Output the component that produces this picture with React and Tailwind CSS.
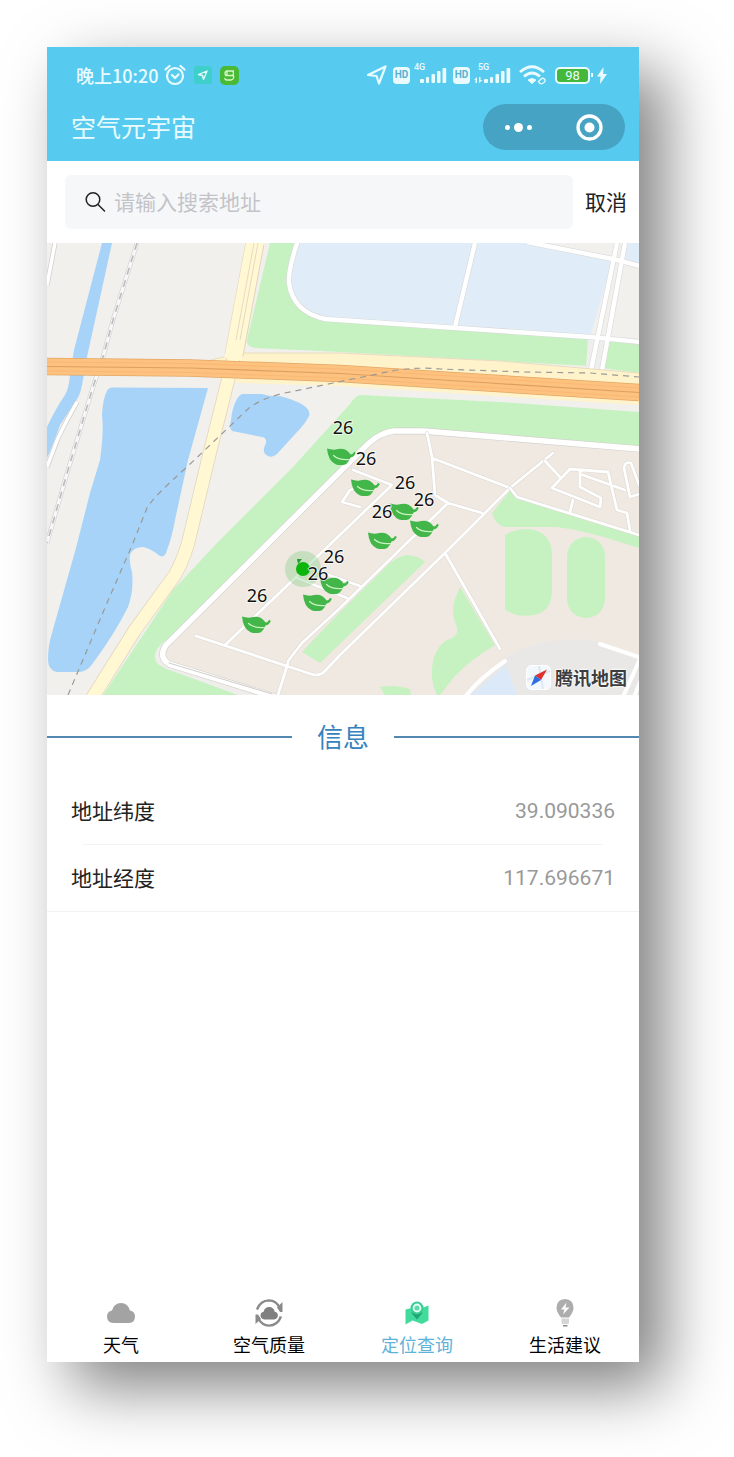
import React from "react";

const cjk = "font-['Noto_Sans_CJK_SC',sans-serif]";

const markers = [
  [341, 456, 343],
  [365, 487, 366],
  [404, 511, 405],
  [424, 528, 424],
  [382, 540, 382],
  [334, 585, 334],
  [317, 602, 318],
  [256, 624, 257],
];

function Signal() {
  return (
    <svg className="h-4 w-[27px]" viewBox="0 0 27 16" fill="currentColor" aria-hidden="true">
      <rect x="0" y="12" width="4" height="4" rx="1" />
      <rect x="6" y="10" width="3" height="6" rx="1" />
      <rect x="11.500" y="7" width="3.500" height="9" rx="1" />
      <rect x="17" y="4" width="3.500" height="12" rx="1" />
      <rect x="22.500" y="1" width="3.700" height="15" rx="1" />
    </svg>
  );
}

function Hd() {
  return (
    <span className="flex h-[17px] w-[17px] items-center justify-center rounded bg-[#e9fbff] font-['Roboto',sans-serif] text-[10px] leading-none font-bold text-[#55b2d2]">
      HD
    </span>
  );
}

function StatusBar() {
  return (
    <div className="flex h-8 items-center justify-between pr-8 pb-[2px] pl-[29px] text-[#e9fbff]">
      <div className="flex items-center">
        <span className="text-lg leading-6 font-medium">晚上10:20</span>
        <svg className="ml-[6px] h-[22px] w-[22px]" viewBox="0 0 22 22" fill="none" stroke="currentColor" strokeWidth="2.200" strokeLinecap="round" aria-label="闹钟">
          <circle cx="11" cy="12" r="8" />
          <path d="M1.500 5.500 5.500 2M20.500 5.500 16.500 2M8 11l3 3 3.500-3.500" />
        </svg>
        <svg className="ml-2 h-[18px] w-[18px]" viewBox="0 0 18 18" aria-hidden="true">
          <rect width="18" height="18" rx="3" fill="#3fcfcb" />
          <path d="M4.500 8.500 13 5l-3.500 8.500L8.500 9.500z" fill="none" stroke="#e9fbff" strokeWidth="1.300" strokeLinejoin="round" />
        </svg>
        <svg className="ml-2 h-[19px] w-[19px]" viewBox="0 0 19 19" aria-hidden="true">
          <rect width="19" height="19" rx="5" fill="#4ab935" />
          <path d="M13.500 5H7.500Q5 5 5 7.300T7.500 9.500H12.500M5.500 9.500H12Q14 9.500 13.700 11.500T11 14H7Q5 14 4.800 12.300M7 5v4M13.300 5v4" fill="none" stroke="#d9f9c8" strokeWidth="1.300" strokeLinecap="round" />
        </svg>
      </div>
      <div className="flex items-center">
        <svg className="h-5 w-5" viewBox="0 0 20 20" fill="none" stroke="currentColor" strokeWidth="2.200" strokeLinejoin="round" aria-hidden="true">
          <path d="M1 10 18.500 1.500 12 18.500 9.500 11z" />
        </svg>
        <span className="ml-[6px]"><Hd /></span>
        <span className="relative ml-[10px]">
          <span className="absolute -top-1 -left-[6px] font-['Roboto',sans-serif] text-[9px] leading-none font-medium">4G</span>
          <Signal />
        </span>
        <span className="ml-[6px]"><Hd /></span>
        <span className="relative ml-[14px]">
          <span className="absolute -top-1 -left-[6px] font-['Roboto',sans-serif] text-[9px] leading-none font-medium">5G</span>
          <svg className="absolute bottom-0 -left-[10px] h-[6px] w-[9px]" viewBox="0 0 9 6" fill="currentColor" aria-hidden="true">
            <path d="M0 3 3 0v6H1.500V3zM8.500 3 5 6V0h1.500v3z" />
          </svg>
          <Signal />
        </span>
        <svg className="ml-2 h-[20px] w-[28px]" viewBox="0 0 28 20" fill="none" stroke="currentColor" strokeWidth="2.800" aria-label="Wi-Fi">
          <path d="M1 7Q13 -3.500 25 7M5 11.500Q13 4.500 21 11.500" />
          <path d="M9 15Q13 12 17 15L13 18.500z" fill="currentColor" strokeWidth="1" />
          <path d="M19.500 16.500 22 14q2-1.500 3.500 0t-.5 3.500q-2.500 2-4 1z" strokeWidth="1.300" />
        </svg>
        <span className="ml-2 flex h-[17px] w-[35px] items-center justify-center rounded-[5px] border-2 border-[#e9fbff] bg-[#43b83a] font-['Roboto',sans-serif] text-[13px] leading-none">
          98
        </span>
        <span className="ml-[1px] h-1 w-[2px] bg-[#e9fbff]" />
        <svg className="ml-1 h-[17px] w-[10px]" viewBox="0 0 10 17" fill="currentColor" aria-hidden="true">
          <path d="M6.500 0 0 9.500h3.500L3 17l7-10H6.200z" />
        </svg>
      </div>
    </div>
  );
}

function Header() {
  return (
    <header className="bg-[#57cbef] pt-[13px] pb-[11px]">
      <StatusBar />
      <div className="mt-3 flex h-[46px] items-center justify-between pr-[14px] pl-6">
        <h1 className="pb-[2px] text-[25px] leading-9 text-[#e9fbff]">空气元宇宙</h1>
        <div className="flex h-[46px] w-[142px] items-center rounded-full bg-[#47a3c3]">
          <button type="button" aria-label="更多" className="flex flex-1 items-center justify-center gap-1">
            <span className="h-[5px] w-[5px] rounded-full bg-white" />
            <span className="h-[9px] w-[9px] rounded-full bg-white" />
            <span className="h-[5px] w-[5px] rounded-full bg-white" />
          </button>
          <button type="button" aria-label="关闭" className="flex flex-1 items-center justify-center">
            <svg className="h-[27px] w-[27px]" viewBox="0 0 27 27">
              <circle cx="13.500" cy="13.500" r="11.500" fill="none" stroke="white" strokeWidth="3.300" />
              <circle cx="13.500" cy="13.500" r="5" fill="white" />
            </svg>
          </button>
        </div>
      </div>
    </header>
  );
}

function SearchBar() {
  return (
    <form className="flex items-center gap-3 py-[14px] pr-3 pl-[18px]" onSubmit={(e) => e.preventDefault()}>
      <label className="flex h-[54px] min-w-0 flex-1 items-center gap-2 rounded-md bg-[#f6f7f9] px-5 pb-[2px]">
        <svg className="h-[21px] w-[21px] shrink-0" viewBox="0 0 21 21" fill="none" stroke="#222" strokeWidth="1.500" strokeLinecap="round" aria-hidden="true">
          <circle cx="8" cy="8.500" r="6.800" />
          <path d="m13 13.500 6.500 6.500" />
        </svg>
        <input
          type="text"
          aria-label="搜索地址"
          placeholder="请输入搜索地址"
          className="min-w-0 flex-1 bg-transparent text-[21px] leading-8 text-[#222] outline-none placeholder:text-[#c3c4c8]"
        />
      </label>
      <button type="button" className="pb-[2px] text-[21px] leading-8 text-[#222]">取消</button>
    </form>
  );
}

function Leaf({ x, y }) {
  return (
    <g transform={`translate(${x} ${y})`}>
      <path d="M-14-7.500Q-8-5.500-3-7 4-8.500 8-3.500L9.500-1.500Q12-1.500 13.200-4.200L14.800-3Q13 1 9.500 1.500 8 6 5 8.200 0 9.800-5 8.500-13 5-14-7.500Z" fill="#43b649" />
      <path d="M-7.500-.5Q-2 4.500 8.500 3.500" fill="none" stroke="#c9f2c0" strokeWidth="1.200" strokeLinecap="round" />
    </g>
  );
}

function MapView() {
  return (
    <section aria-label="地图" className="relative overflow-hidden">
      <svg className="block h-auto w-full" viewBox="47 243 592 452" fill="none">
        <rect x="47" y="243" width="592" height="452" fill="#f1f0ed" />

        {/* water */}
        <g fill="#a6d3f7">
          <path d="M102 243H112L87 357 82 385Q80 397 73 405L60 425Q55 440 47 458V427Q56 408 65 395 69 388 70 375L74 350Z" />
          <path d="M112 387.500 208 388 188 460 175 520Q172 537 167 550 165 558 160 556 150 548 143 547 133 547 130 555 129 562 132 572 134 590 128 607 114 635 93 663 88 671 80 672H57Q48 670 48 660 48 645 52 633L76 548 90 493 100 460Q104 432 102 415 103 398 107 391 108 388 112 387.500Z" />
          <path d="M243 394H262Q272 397 280 396 295 400 303 405 311 410 309 416 305 424 297 432L277 454Q272 458 268 456 263 454 264 448L266 443Q267 438 262 437L232 431Q229 429 231 420 232 408 237 399 240 394 243 394Z" />
        </g>

        {/* local paths on the west side */}
        <path d="M55 243 47 285M77 402 66 422 58 438 47 467" stroke="#cfcfcf" strokeWidth="5" />
        <path d="M55 243 47 285M77 402 66 422 58 438 47 467" stroke="#fff" strokeWidth="3.500" />
        <path d="M137 243 113 320 103 357 93 387 68 470 47 543" stroke="#d3d2d2" strokeWidth="4.500" />
        <path d="M137 243 113 320 103 357 93 387 68 470 47 543" stroke="#f8f8f8" strokeWidth="3.200" />
        <path d="M137 243 113 320 103 357 93 387 68 470 47 543" stroke="#bdbbbb" strokeWidth="1.600" strokeDasharray="7 6" />

        {/* blocks north of the highway */}
        <path d="M270 243H297Q287 278 288 283 292 310 322 318L457 328 590 337 639 342V373L588 366 340 352 255 348Q246 346 247 340Z" fill="#c6f2c1" />
        <path d="M297 243H530L613 259 590 337 457 328 322 318Q292 310 289 283 290 268 297 243Z" fill="#e0edf9" />
        <path d="M625 243H639V265L622 259Z" fill="#e0edf9" />
        <path d="M588 337H605L600 368H586Z" fill="#eeeeec" />
        <g strokeLinejoin="round">
          <path d="M298 240Q288 270 289 283 293 312 325 319L457 328 590 337 640 342M475 243 455 327M527 242 613 259 640 266M617 243 591 370M625 243 602 370" stroke="#d9d9d9" strokeWidth="5.600" />
          <path d="M298 240Q288 270 289 283 293 312 325 319L457 328 590 337 640 342M475 243 455 327M527 242 613 259 640 266M617 243 591 370M625 243 602 370" stroke="#fff" strokeWidth="4.400" />
        </g>

        {/* campus */}
        <path d="M360 395 500 402 639 412V695H103L173 590 217 543 293 467 350 404Q355 396 360 395Z" fill="#c6f2c1" />
        <path d="M166 640Q150 652 157 663 162 668 175 672L238 695H290L300 600Z" fill="#efeeeb" />
        <path d="M639 448 423 431H392Q378 434 368 444L166 645Q159 658 171 664L273 695H639Z" fill="#efe9e1" />
        <g fill="#c6f2c1">
          <path d="M492 513 510 491 517 498 570 513 639 537V548L607 538Q580 530 557 527H505Q496 526 492 513Z" />
          <path d="M505 535Q515 529 528 529 552 531 552 556V592Q551 612 534 615 515 618 505 609Z" />
          <rect x="567" y="537" width="38" height="81" rx="19" />
          <path d="M425 562Q418 555 406 555 398 557 390 563L340 612 302 652 320 663Z" />
          <path d="M460 587 495 645Q470 660 454 677L440 695H437Q431 684 432 668 434 648 447 640 459 637 457 627 451 615 454 602Z" />
          <path d="M380 687Q395 684 410 689L411 695H385Z" />
        </g>
        <path d="M465 695 500 662Q520 645 557 640 610 635 639 663V695Z" fill="#e9e8e7" />
        <path d="M471 695 506 665 517 695Z" fill="#dce9f8" />

        <g strokeLinejoin="round" strokeLinecap="round">
          <path d="M641 449 423 431H394Q380 433 369 443L166 645Q158 657 169 664L275 697" stroke="#d3d0cd" strokeWidth="6.800" />
          <path d="M641 449 423 431H394Q380 433 369 443L166 645Q158 657 169 664L275 697" stroke="#fff" strokeWidth="5.600" />
          <path d="M169 663 272 694" stroke="#cfccc9" strokeWidth="1" />
          <path
            d="M427 433 432 457 435 495 448 503 482 513M432 458 510 488M553 453 510 488 445 553 340 655 325 671Q319 677 311 674L196 636M288 663 278 695M288 661 302 643 340 608 448 503M225 645 295 578 392 485 353 470M297 578 347 598M315 570 360 586M360 507 342 502 350 490 363 486M445 553 500 649"
            stroke="#dbd7d2" strokeWidth="3.800"
          />
          <path
            d="M427 433 432 457 435 495 448 503 482 513M432 458 510 488M553 453 510 488 445 553 340 655 325 671Q319 677 311 674L196 636M288 663 278 695M288 661 302 643 340 608 448 503M225 645 295 578 392 485 353 470M297 578 347 598M315 570 360 586M360 507 342 502 350 490 363 486M445 553 500 649"
            stroke="#fff" strokeWidth="2.800"
          />
          <path
            d="M510 488 517 497 639 535M545 461 560 477M552 488 600 507 601 498 580 487 580 472M552 488 570 469 608 472 617 510 627 513 630 531M580 474 625 490M573 500 570 512M639 494 630 497 624 468Q625 461 631 463L639 485"
            stroke="#dbd7d2" strokeWidth="3.800"
          />
          <path
            d="M510 488 517 497 639 535M545 461 560 477M552 488 600 507 601 498 580 487 580 472M552 488 570 469 608 472 617 510 627 513 630 531M580 474 625 490M573 500 570 512M639 494 630 497 624 468Q625 461 631 463L639 485"
            stroke="#fff" strokeWidth="2.800"
          />
          <path d="M465 697Q480 678 505 661M600 644 639 657M639 661 623 697M643 675 634 697" stroke="#fff" strokeWidth="4" />
        </g>

        {/* arterial roads */}
        <path d="M207 361 240 353 340 353 500 361 639 373V405L340 386 240 383 207 376Z" fill="#fff3cb" />
        <path d="M207 361 240 353 340 353 500 361 639 373" stroke="#e9dcc0" strokeWidth="1" />
        <path d="M255 240 233 360 208 460 190 535Q186 555 175 575L135 630 91 700" stroke="#e2d4bd" strokeWidth="14" />
        <path d="M255 240 233 360 208 460 190 535Q186 555 175 575L135 630 91 700" stroke="#fff8d2" strokeWidth="12.500" />
        <path d="M255 243 234 355" stroke="#e2d4bd" strokeWidth="19" />
        <path d="M255 242 233 359" stroke="#fff8d2" strokeWidth="17.500" />
        <path d="M254 243 236 340M258 243 240 340" stroke="#e6d9c2" strokeWidth="1" />
        <path d="M47 366.500 190 368 340 373.500 490 383 639 392.500" stroke="#e2a765" strokeWidth="17.500" />
        <path d="M47 366.500 190 368 340 373.500 490 383 639 392.500" stroke="#fdc27f" strokeWidth="16" />
        <path d="M47 366.500 190 368 340 373.500 490 383 639 392.500" stroke="#dfa05e" strokeWidth="1.200" />
        <path d="M47 362 190 363.500 340 369 490 378.500 639 388M47 371 190 372.500 340 378 490 387.500 639 397" stroke="#fab873" strokeWidth="1" />

        {/* metro line */}
        <path
          d="M68 695 107 603 133 543 147 508Q152 498 187 467L250 407Q262 399 280 394L333 383 397 370Q420 367 440 369L523 372 590 373 639 377"
          stroke="#9a9a98" strokeWidth="1.200" strokeDasharray="6 5"
        />

        {/* current position */}
        <circle cx="303" cy="569" r="18" fill="#7fcf7f" fillOpacity="0.350" />
        <path d="M297 559l5 0-4 5z" fill="#2a9a35" />
        <circle cx="303" cy="569" r="7" fill="#0db50d" />

        {markers.map(([x, y]) => (
          <Leaf key={`leaf-${x}`} x={x} y={y} />
        ))}
        <g className="font-['Noto_Sans',sans-serif] text-lg" fill="#111" stroke="#fff" strokeWidth="2" strokeOpacity="0.700" paintOrder="stroke" textAnchor="middle">
          {markers.map(([x, y, tx]) => (
            <text key={`aqi-${x}`} x={tx} y={y - 22}>26</text>
          ))}
        </g>
      </svg>
      <a href="#map" className="absolute right-3 bottom-1 flex items-center gap-1 text-lg leading-7 font-bold text-[#3d3d3f] [text-shadow:0_0_2px_#fff,0_0_2px_#fff,0_0_3px_#fff]">
        <svg className="h-[25px] w-[25px]" viewBox="0 0 25 25" aria-hidden="true">
          <rect x="0.500" y="0.500" width="24" height="24" rx="5" fill="#f3f8fd" stroke="#fff" />
          <path d="M1 15 24 6M13 1l4 23" stroke="#dce8f4" strokeWidth="2" />
          <path d="M21 4.500 9 10.500 15 15z" fill="#e0322c" />
          <path d="M5 21 9 10.500 15 15z" fill="#2c6fe0" />
        </svg>
        腾讯地图
      </a>
    </section>
  );
}

function Info() {
  return (
    <section>
      <div className="flex h-[83px] items-center gap-[25px]">
        <span className="h-[2px] flex-1 bg-[#5088b0]" />
        <h2 className="pb-[2px] text-[26px] leading-9 text-[#3583be]">信息</h2>
        <span className="h-[2px] flex-1 bg-[#5088b0]" />
      </div>
      <dl className="text-[21px] leading-8">
        <div className="flex h-[66px] items-center justify-between px-6">
          <dt className="pb-[2px] text-[#222]">地址纬度</dt>
          <dd className="font-['Roboto',sans-serif] text-[#999]">39.090336</dd>
        </div>
        <div className="mx-9 h-px bg-[#f2f2f2]" />
        <div className="flex h-[66px] items-center justify-between px-6">
          <dt className="pb-[2px] text-[#222]">地址经度</dt>
          <dd className="font-['Roboto',sans-serif] text-[#999]">117.696671</dd>
        </div>
        <div className="h-px bg-[#f2f2f2]" />
      </dl>
    </section>
  );
}

const cloud = "M6.500 20Q0 19.500 0 13.500 0 8.500 5 7.500 7 0 14 0T23 7.500Q28 8.500 28 13.500 28 19.500 22 20Z";

const tabs = [
  {
    label: "天气",
    icon: (
      <svg className="h-7 w-7" viewBox="0 0 28 28" fill="#a3a3a3">
        <path transform="translate(0 4)" d={cloud} />
      </svg>
    ),
  },
  {
    label: "空气质量",
    icon: (
      <svg className="h-7 w-7" viewBox="0 0 28 28" fill="none" stroke="#8a8a8a" strokeWidth="2.400">
        <path transform="translate(5.500 8) scale(.62)" d={cloud} fill="#808080" stroke="none" />
        <path d="M2 10.500Q5.500 1.500 14 1.400 21 1.500 25 9M26 17.500Q22.500 26.500 14 26.600 7 26.500 3 19" />
        <path d="M27.500 3v10h-2.500L22 8.500zM.5 25V15.500H3L6 20z" fill="#8a8a8a" stroke="none" />
      </svg>
    ),
  },
  {
    label: "定位查询",
    active: true,
    icon: (
      <svg className="h-7 w-7" viewBox="0 0 28 28">
        <path d="M2.500 10.500 9 9h10l6.500-2.500V21.500L19 25 9.500 21.500 2.500 25.500Z" fill="#41dc9c" />
        <path d="M8 13.500 14 20.500 20 13.500Z" fill="#22a476" />
        <circle cx="14" cy="9" r="6.500" fill="#35cd93" />
        <circle cx="14" cy="9" r="3.500" fill="#5cdcae" stroke="#e9fff6" strokeWidth="1.800" />
      </svg>
    ),
  },
  {
    label: "生活建议",
    icon: (
      <svg className="h-7 w-7" viewBox="0 0 28 28">
        <path d="M14 0Q22.500.5 22.500 9 22.500 13 18 18.500H10Q5.500 13 5.500 9 5.500.5 14 0Z" fill="#adadad" />
        <path d="M15.500 3.500 10 10.500H13.500L12 15.500 18.500 8.500H14.500Z" fill="#fff" />
        <path d="M10.500 19.500h7.500v4q0 1.500-1.500 1.500H12q-1.500 0-1.500-1.500z" fill="#d5d5d5" />
        <path d="M12 26h4.500v1.500H12z" fill="#8a8a8a" />
      </svg>
    ),
  },
];

function TabBar() {
  return (
    <nav className="mt-auto grid grid-cols-4 pb-[6px]">
      {tabs.map((t) => (
        <a key={t.label} href="#tab" aria-current={t.active ? "page" : undefined} className={`flex flex-col items-center gap-[5px] text-lg leading-6 ${t.active ? "text-[#5fb2d8]" : "text-black"}`}>
          {t.icon}
          {t.label}
        </a>
      ))}
    </nav>
  );
}

export default function App() {
  return (
    <div className={`flex min-h-screen flex-col overflow-hidden bg-white pt-[47px] pr-[95px] pb-[95px] pl-[47px] ${cjk}`}>
      <main className="flex flex-1 flex-col bg-white shadow-[25px_25px_60px_rgba(0,0,0,0.5)]">
        <Header />
        <SearchBar />
        <MapView />
        <Info />
        <TabBar />
      </main>
    </div>
  );
}
